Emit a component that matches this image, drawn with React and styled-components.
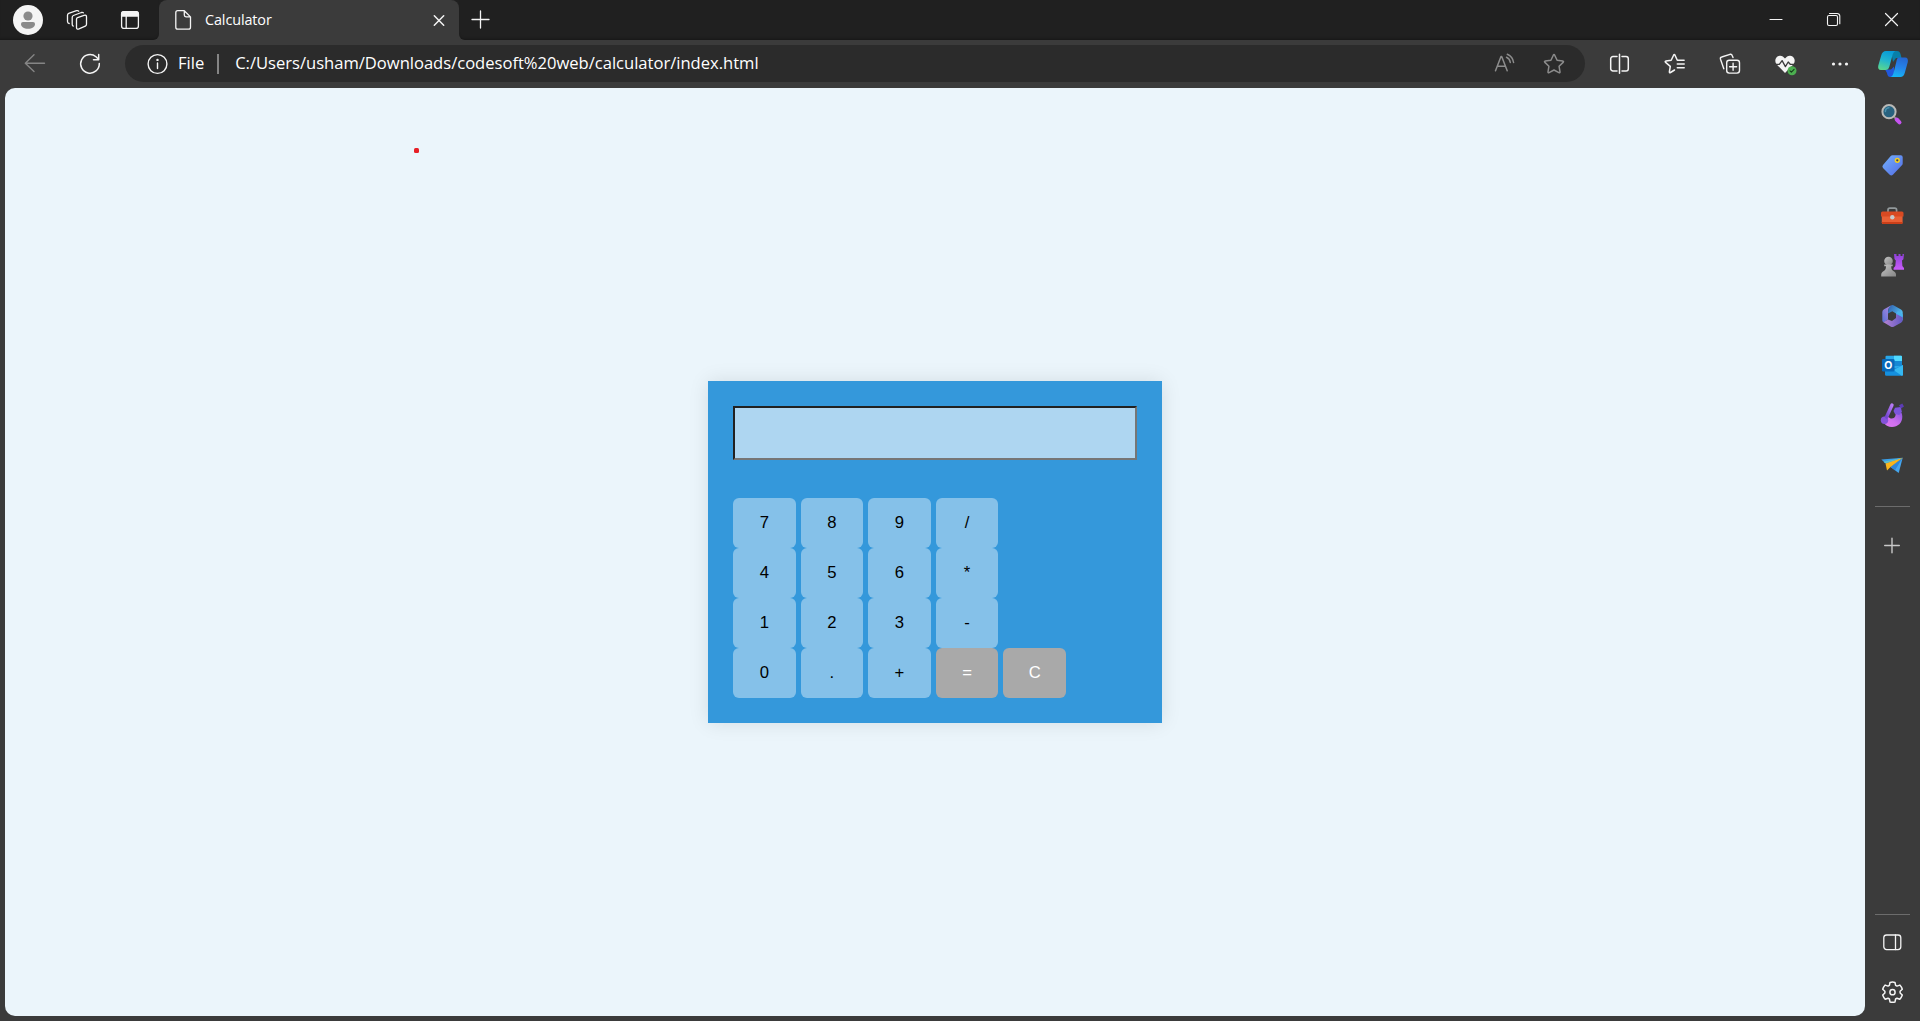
import React from "react";
import styled, { createGlobalStyle } from "styled-components";

const GlobalStyle = createGlobalStyle`
  * { box-sizing: border-box; }
  html, body { margin: 0; padding: 0; background: #3b3b3b; overflow: hidden; }
`;

const Browser = styled.div`
  display: flex;
  flex-direction: column;
  width: 1920px;
  height: 1021px;
  background: #3b3b3b;
  color: #fff;
  font-family: "Open Sans", "Noto Sans", sans-serif;
`;

const TitleBar = styled.header`
  display: flex;
  height: 40px;
  flex: none;
`;

const BarSection = styled.div`
  display: flex;
  align-items: center;
  background: #202020;
  box-shadow: inset 0 -3px 3px -2px rgba(0, 0, 0, 0.3);
`;

const BarStart = styled(BarSection)`
  width: 159px;
  padding-left: 13px;
  border-bottom-right-radius: 6px;
`;

const BarEnd = styled(BarSection)`
  flex: 1;
  padding-left: 9px;
  padding-right: 16px;
  border-bottom-left-radius: 6px;
`;

const TabSlot = styled.div`
  width: 300px;
  background: #202020;
`;

const Tab = styled.div`
  display: flex;
  align-items: center;
  height: 40px;
  padding: 0 8px 0 12px;
  background: #3b3b3b;
  border-radius: 8px 8px 0 0;
`;

const TabTitle = styled.span`
  flex: 1;
  margin-left: 10px;
  font-size: 14.4px;
  line-height: 20px;
  letter-spacing: -0.1px;
`;

const Glyph = styled.svg`
  display: block;
  flex: none;
  width: ${(p) => p.$size || 24}px;
  height: ${(p) => p.$size || 24}px;
  margin-left: ${(p) => p.$gap || 0}px;
  overflow: visible;
  fill: none;
  stroke: ${(p) => p.$color || "#f4f4f4"};
  stroke-width: ${(p) => p.$weight || 1.3};
  stroke-linecap: round;
  stroke-linejoin: round;
`;

const WindowButtons = styled.div`
  display: flex;
  gap: 34px;
  margin-left: auto;
`;

const Toolbar = styled.nav`
  display: flex;
  align-items: center;
  flex: none;
  height: 48px;
  padding: 0 12px 0 23px;
`;

const AddressBar = styled.div`
  display: flex;
  align-items: center;
  width: 1460px;
  height: 37px;
  margin-left: 23px;
  margin-bottom: 1px;
  padding: 0 19px 0 20px;
  border-radius: 19px;
  background: #2b2b2b;
`;

const AddressText = styled.span`
  padding-bottom: 1px;
  font-size: 16.6px;
  line-height: 24px;
  white-space: nowrap;
  letter-spacing: -0.02px;
  margin-left: ${(p) => p.$gap}px;
`;

const AddressRule = styled.i`
  width: 2px;
  height: 20px;
  margin-left: 13px;
  background: #858585;
`;

const AddressActions = styled.div`
  display: flex;
  gap: 25px;
  margin-left: auto;
`;

const ToolbarActions = styled.div`
  display: flex;
  gap: 31px;
  margin-left: 23px;
`;

const Body = styled.div`
  display: flex;
  flex: 1;
  padding-left: 5px;
`;

const Page = styled.main`
  position: relative;
  display: flex;
  align-items: center;
  justify-content: center;
  width: 1860px;
  height: 928px;
  border-radius: 10px;
  background: #ebf5fb;
`;

const PointerDot = styled.i`
  position: absolute;
  left: 409px;
  top: 59.5px;
  width: 5px;
  height: 5px;
  border-radius: 1.5px;
  background: #e71f26;
`;

const Calculator = styled.section`
  width: 454px;
  height: 342px;
  padding: 25px;
  background: #3498db;
  box-shadow: 0 0 19px rgba(0, 0, 0, 0.1);
`;

const Display = styled.div`
  height: 54px;
  margin-bottom: 38px;
  border: 2px solid;
  border-color: #212121 #767676 #767676 #212121;
  background: #aed6f1;
`;

const KeyRow = styled.div`
  display: flex;
  gap: 5px;
`;

const Key = styled.button`
  width: 62.6px;
  height: 50px;
  padding: 0;
  border: 0;
  border-radius: 6px;
  background: ${(p) => (p.$muted ? "#a9a9a9" : "#85c1e9")};
  color: ${(p) => (p.$muted ? "#fff" : "#000")};
  font: 16.67px "Liberation Sans", Arial, sans-serif;
`;

const Sidebar = styled.aside`
  display: flex;
  flex-direction: column;
  width: 55px;
  height: 933px;
  padding: 1px 0 8px;
`;

const SideItem = styled.div`
  display: flex;
  align-items: center;
  justify-content: center;
  flex: none;
  height: ${(p) => p.$height || 50}px;
  padding-right: 1px;
  padding-top: ${(p) => (p.$drop || 0) * 2}px;
`;

const SideRule = styled.hr`
  flex: none;
  width: 35px;
  height: 1px;
  margin: ${(p) => (p.$bottom ? "auto" : "17px")} 10px 0;
  border: 0;
  background: #6c6c6c;
`;

const keys = [
  ["7", "8", "9", "/"],
  ["4", "5", "6", "*"],
  ["1", "2", "3", "-"],
  ["0", ".", "+", "=", "C"],
];

const Profile = () => (
  <Glyph $size={30} viewBox="0 0 30 30" stroke="none">
    <g stroke="none">
      <circle cx="15" cy="15" r="15" fill="#f5f5f5" />
      <circle cx="15" cy="11" r="4.6" fill="#8b8b8b" />
      <path d="M8 19a2 2 0 0 1 2-2h10a2 2 0 0 1 2 2c0 3-3 4.800-7 4.800S8 22 8 19z" fill="#8b8b8b" />
    </g>
  </Glyph>
);

const Workspaces = () => (
  <Glyph $gap={22} viewBox="0 0 24 24">
    <path d="M11.500 11.200q0-1.200 1.100-1.600l6.400-2.300q2.500-.7 2.500 1.500v7.400q0 1.400-1.200 1.900l-6.300 2.800q-2.500 1-2.500-1.500z" />
    <path d="M8.300 18.200q-1.100-.3-1.100-1.900V9.400q0-1.400 1.200-1.900l8-3q1.300-.3 1.900.3" />
    <path d="M4.200 15.500q-1.700-.3-1.700-2V7.300q0-1.400 1.200-1.900l7.800-2.700q1.500-.4 2.200.5" />
  </Glyph>
);

const TabActions = () => (
  <Glyph $gap={29} viewBox="0 0 24 24">
    <rect x="3.600" y="3.600" width="16.800" height="16.800" rx="2.500" />
    <path d="M3.600 8V6a2.400 2.400 0 0 1 2.400-2.400h12A2.400 2.400 0 0 1 20.400 6v2z" fill="#f4f4f4" />
    <path d="M8.200 8v12" />
  </Glyph>
);

const DocumentIcon = () => (
  <Glyph viewBox="0 0 24 24">
    <path d="M6.800 2.700h6.500l6.200 6.200v10.300a2 2 0 0 1-2 2H6.800a2 2 0 0 1-2-2V4.700a2 2 0 0 1 2-2zM13.300 2.900v4.200a1.700 1.700 0 0 0 1.700 1.700h4.300" />
  </Glyph>
);

const TabClose = () => (
  <Glyph viewBox="0 0 24 24" $weight={1.5}>
    <path d="M7.300 7.800l9.400 9.400M16.700 7.800l-9.400 9.400" />
  </Glyph>
);

const NewTab = () => (
  <Glyph viewBox="0 0 24 24">
    <path d="M4 11.500h17M12.500 3v17" />
  </Glyph>
);

const Minimize = () => (
  <Glyph viewBox="0 0 24 24" $weight={1.1}>
    <path d="M6 11.500h12" />
  </Glyph>
);

const Restore = () => (
  <Glyph viewBox="0 0 24 24" $weight={1.1}>
    <rect x="5.500" y="7.500" width="10" height="10" rx="1.500" />
    <path d="M7.500 5.500h7.700a2.600 2.600 0 0 1 2.600 2.600v7.600" />
  </Glyph>
);

const CloseWindow = () => (
  <Glyph viewBox="0 0 24 24" $weight={1.2}>
    <path d="M5.500 5.500l12 12M17.500 5.500l-12 12" />
  </Glyph>
);

const Back = () => (
  <Glyph viewBox="0 0 24 24" $color="#858585" $weight={1.4}>
    <path d="M11 2.800L2.300 11.200l8.700 8.300M2.500 11.200h19" />
  </Glyph>
);

const Reload = () => (
  <Glyph viewBox="0 0 24 24" $gap={31} $weight={1.5}>
    <path d="M21.300 11.500A9.300 9.300 0 1 1 18 4.700l2.500 2.500M20.700 2.500v5.200h-5.200" />
  </Glyph>
);

const Info = () => (
  <Glyph viewBox="0 0 24 24" $weight={1.4}>
    <circle cx="12.500" cy="12" r="9.400" />
    <path d="M12.500 11v5.500" />
    <circle cx="12.500" cy="7.900" r=".5" fill="#fff" />
  </Glyph>
);

const ReadAloud = () => (
  <Glyph viewBox="0 0 24 24" $color="#8c8c8c" $weight={1.5}>
    <path d="M2.500 18.700L8 4.500h.7l5.500 14.200M4.500 14.300h8M14.300 2.200c3.600 1.600 5.800 4.600 6.300 8.300M13.500 5.200c2.200 1 3.500 2.900 3.800 5.300" />
  </Glyph>
);

const starPath =
  "M11.300 3.200q.7-1.200 1.400 0l2.400 5 5.600.8q1.400.3.400 1.400l-4 3.900.9 5.500q.1 1.400-1.100.8L12 18l-4.900 2.600q-1.200.6-1.100-.8l.9-5.500-4-3.900q-1-1.100.4-1.400l5.600-.8z";

const Star = () => (
  <Glyph viewBox="0 0 24 24" $color="#8c8c8c" $weight={1.5}>
    <path d={starPath} />
  </Glyph>
);

const Split = () => (
  <Glyph viewBox="0 0 24 24" $weight={1.5}>
    <path d="M9 4.500H5A2.300 2.300 0 0 0 2.700 6.800v9.900A2.300 2.300 0 0 0 5 19H9M14 4.500h4A2.300 2.300 0 0 1 20.300 6.800v9.900A2.300 2.300 0 0 1 18 19h-4M11.500 2.300v19" />
  </Glyph>
);

const Favorites = () => (
  <Glyph viewBox="0 0 24 24" $weight={1.5}>
    <path d="M11.500 18l-4 2.500q-1.300.6-1.100-.8l.9-5.300-4.700-4q-1-1.100.4-1.400l5.200-.8 2.400-5q.7-1.200 1.400 0l2.300 5h6.800M14.300 12h6.900M14.300 15.800h6.900" />
  </Glyph>
);

const Collections = () => (
  <Glyph viewBox="0 0 24 24" $weight={1.4}>
    <rect x="8.700" y="8.300" width="12.800" height="12.800" rx="2.500" />
    <path d="M15.100 11.300v7M11.600 14.800h7M5.800 16.800L2.500 7.200q-.5-1.700 1.200-2.200L12 2.300q1.700-.4 2.200 1.200l.8 2.100" />
  </Glyph>
);

const Essentials = () => (
  <Glyph viewBox="0 0 24 24">
    <path d="M12 21L3.500 12.300C1 9 2.500 4 6.700 3.700c2.300-.2 3.800 1 5.300 2.700 1.500-1.700 3-2.900 5.300-2.700C21.500 4 23 9 20.500 12.300z" fill="#f4f4f4" stroke="none" />
    <path d="M1.500 12.300h4.800l2.800-3.700 3.300 6 2.800-4.600 2 2.300h5.500" stroke="#3b3b3b" />
    <circle cx="19" cy="18.700" r="4.500" fill="#4caf50" stroke="none" />
    <path d="M17 18.800l1.400 1.400 2.700-2.800" stroke="#163b1b" strokeWidth="1.1" />
  </Glyph>
);

const More = () => (
  <Glyph viewBox="0 0 24 24">
    <g fill="#f4f4f4" stroke="none">
      <circle cx="5.500" cy="12" r="1.600" />
      <circle cx="12" cy="12" r="1.600" />
      <circle cx="18.500" cy="12" r="1.600" />
    </g>
  </Glyph>
);

const Copilot = () => (
  <Glyph $size={30} $gap={26} viewBox="0 -1 30 30">
    <defs>
      <linearGradient id="cp-left" x1=".6" y1="0" x2=".3" y2="1">
        <stop offset="0" stopColor="#079bd8" />
        <stop offset=".5" stopColor="#22b5cf" />
        <stop offset="1" stopColor="#59d68f" />
      </linearGradient>
      <linearGradient id="cp-right" x1=".6" y1="0" x2=".4" y2="1">
        <stop offset="0" stopColor="#2567d2" />
        <stop offset=".5" stopColor="#2583e9" />
        <stop offset="1" stopColor="#15b5f5" />
      </linearGradient>
    </defs>
    <g stroke="none">
      <path d="M13 1h6c2 0 3 1.300 3.500 3l1 4h-5.500l-3 4z" fill="#087fa8" />
      <path d="M7 19.500h6l3-3v10.500h-3c-3 0-3.500-1.500-4-4z" fill="#2158dc" />
      <path d="M8 1h9.500c-2 .5-2.700 3-3.500 6l-2.600 9.500c-.7 2.500-1.800 3.500-4 3.500H3C.5 20-.3 18 .3 15.500l2.900-10C4 2.500 5.500 1 8 1z" fill="url(#cp-left)" />
      <path d="M21 7.500h6c2.500 0 3.300 2 2.800 4.500l-2.900 10.500c-.8 3-2.200 4.500-4.700 4.500H12.500c2.200-.5 2.700-3 3.500-6l2.300-9c.7-3 .9-4.500 2.700-4.500z" fill="url(#cp-right)" />
    </g>
  </Glyph>
);

const SearchIcon = () => (
  <Glyph viewBox="0 0 24 24">
    <path d="M14 14.700l2.500 2.500" stroke="#8d8d8d" strokeWidth="2" />
    <path d="M16.700 17.500l2.800 2.800" stroke="#c553ef" strokeWidth="4" />
    <circle cx="9" cy="9.700" r="6.600" fill="#28627f" stroke="#b9b9b7" strokeWidth="2" />
    <path d="M5.400 9.500a3.800 3.800 0 0 1 3.500-3.700" stroke="#4b91ae" strokeWidth="1.5" />
  </Glyph>
);

const TagIcon = () => (
  <Glyph viewBox="0 0 24 24">
    <defs>
      <linearGradient id="tag" x1="0" y1=".3" x2=".7" y2="1">
        <stop offset="0" stopColor="#6fa7f8" />
        <stop offset="1" stopColor="#5775e8" />
      </linearGradient>
    </defs>
    <path d="M10.500 3.200q.9-.9 2-.9h8.200q2 0 2 2v6.200q0 1-.8 1.800l-9 9.400q-1.600 1.400-3.200 0l-6.700-6.800q-1.200-1.500 0-3z" fill="url(#tag)" stroke="none" />
    <circle cx="17.300" cy="7.300" r="1.900" fill="#3b4560" stroke="#f3ce22" strokeWidth="1.5" />
  </Glyph>
);

const ToolboxIcon = () => (
  <Glyph viewBox="0 0 24 24">
    <path d="M8 7.500V6q0-1.800 1.800-1.800h5q1.800 0 1.800 1.800v1.500" stroke="#92999b" strokeWidth="1.7" />
    <g stroke="none">
      <path d="M1.800 12h20.800v6.500q0 1.500-1.500 1.500H3.300q-1.500 0-1.500-1.500z" fill="#e96035" />
      <path d="M1.800 18h20.800v.5q0 1.500-1.500 1.500H3.300q-1.500 0-1.500-1.500z" fill="#cb3f19" />
      <path d="M2.500 7.500h19.500q1.500 0 1.500 1.500v3.500H1V9q0-1.500 1.500-1.500z" fill="#d94a22" />
      <circle cx="12.300" cy="13.300" r="2.200" fill="#c6cbce" />
    </g>
  </Glyph>
);

const GamesIcon = () => (
  <Glyph viewBox="0 0 24 24">
    <defs>
      <linearGradient id="pawn" x1="0" y1="0" x2="1" y2="1">
        <stop offset="0" stopColor="#c4c4c4" />
        <stop offset="1" stopColor="#858585" />
      </linearGradient>
      <linearGradient id="rook" x1="0" y1="0" x2="0" y2="1">
        <stop offset="0" stopColor="#8d40d8" />
        <stop offset="1" stopColor="#ca5dfa" />
      </linearGradient>
    </defs>
    <g stroke="none">
      <path d="M14 1h2.500v2h2V1h2v2h2V1H24l-.6 5.200-1.400 1.300.4 5.500 1.600 2v1.800H13.600V15l1.700-2 .5-5.500L14.500 6z" fill="url(#rook)" />
      <circle cx="8.500" cy="8" r="4.300" fill="url(#pawn)" />
      <path d="M4.300 11.500h8.400v1.800h-1.500c0 3 1 4.200 3.300 5.400q1.500.9 1.500 2.800v2H1.200v-2q0-1.900 1.500-2.800c2.300-1.200 3.300-2.400 3.300-5.400H4.300z" fill="url(#pawn)" />
    </g>
  </Glyph>
);

const OfficeIcon = () => (
  <Glyph viewBox="0 0 24 24">
    <defs>
      <linearGradient id="office-left" x1="1" y1="0" x2="0" y2="1">
        <stop offset="0" stopColor="#b98be2" />
        <stop offset="1" stopColor="#5671d3" />
      </linearGradient>
      <linearGradient id="office-top" x1="0" y1="0" x2="1" y2=".6">
        <stop offset="0" stopColor="#2f5cab" />
        <stop offset="1" stopColor="#54c4f4" />
      </linearGradient>
      <linearGradient id="office-base" x1="0" y1="0" x2="1" y2="0">
        <stop offset="0" stopColor="#b583d2" />
        <stop offset="1" stopColor="#6259c4" />
      </linearGradient>
    </defs>
    <g stroke="none">
      <path d="M8.500 3L11.500 1.200q1-.4 2 .1L21 5.500q1.700 1 1.700 2.500v8.500L16 12V9.500L12.300 7.200 8 9.500z" fill="url(#office-top)" />
      <path d="M11.500 1.200L4 5.300Q2.300 6.300 2.300 8v8.500q0 1.200 1.300 2L8 15.500V6.500q0-3 3.500-5.300z" fill="url(#office-left)" />
      <path d="M22.700 12.500V16q0 1.700-1.700 2.700l-7.300 4q-1.400.7-2.700 0L3.500 18.300 8 15.500l4 1.500 4-3V9.700z" fill="url(#office-base)" />
      <path d="M16 9.500l6.700 4v-3L18 7z" fill="#48b2ee" />
    </g>
  </Glyph>
);

const OutlookLetter = styled.text`
  font: 700 10.5px Inter, sans-serif;
  fill: #fff;
  stroke: none;
  text-anchor: middle;
`;

const OutlookIcon = () => (
  <Glyph viewBox="0 0 24 24">
    <g stroke="none">
      <rect x="5.500" y="1.700" width="16.500" height="13" rx="1" fill="#29a8ea" />
      <path d="M14 1.700h7q1 0 1 1v5h-8z" fill="#50d9ff" />
      <path d="M14 7h8v5h-8z" fill="#1688d4" />
      <path d="M5 12l9 3 9-4v9.500q0 1.200-1.200 1.200H6.200Q5 21.700 5 20.500z" fill="#1590df" />
      <path d="M23 11v9.500q0 1.200-1.200 1.200L13.500 16z" fill="#35b8f1" />
      <rect x="2" y="5" width="12.500" height="12.500" rx="1.200" fill="#0869b9" />
    </g>
    <OutlookLetter x="8.300" y="15">O</OutlookLetter>
  </Glyph>
);

const DesignerIcon = () => (
  <Glyph viewBox="0 0 24 24">
    <defs>
      <linearGradient id="swoosh" x1="1" y1="0" x2="0" y2="1">
        <stop offset="0" stopColor="#8a55e0" />
        <stop offset=".55" stopColor="#cf70ee" />
        <stop offset="1" stopColor="#df78f4" />
      </linearGradient>
      <linearGradient id="brush" x1="1" y1="0" x2="0" y2="1">
        <stop offset="0" stopColor="#b67af5" />
        <stop offset="1" stopColor="#7445ce" />
      </linearGradient>
    </defs>
    <g stroke="none">
      <path d="M3.500 19c1.500 3.500 4.800 5 8.500 5 5.800 0 10.300-4.300 10.300-10.300 0-1.700-.4-3.400-1.200-4.700h-6c1.300 3.500 0 6.500-3.300 6.500-1.500 0-2.700-.6-3.400-1.500z" fill="url(#swoosh)" />
      <path d="M15 4.800l5.800-.8 1 4.500-2.500 3.500-4.300-1-1.500-3z" fill="#7c55dc" />
      <path d="M19 2.300l3.300-1.800 1.700 3-3 2z" fill="#5c3cb4" />
      <circle cx="4.500" cy="17.300" r="3.700" fill="#8453da" />
    </g>
    <path d="M12 2L6.500 14" stroke="url(#brush)" strokeWidth="3.4" />
  </Glyph>
);

const DropIcon = () => (
  <Glyph viewBox="0 0 24 24">
    <g stroke="none">
      <path d="M1.300 6.500L22.700 4.700 7.500 12z" fill="#3a9fe8" />
      <path d="M22.700 4.700l-4 15.200L10.500 14z" fill="#45a6ee" />
      <path d="M22.700 4.700L15 17.200 10.500 14z" fill="#2e86db" />
      <path d="M5.500 10.500L22.700 4.700 10.500 14 7 17.500z" fill="#f9b51c" />
      <path d="M22.700 4.700L3.500 8.700l1.600 1.500z" fill="#63c1c4" />
    </g>
  </Glyph>
);

const AddIcon = () => (
  <Glyph viewBox="0 0 24 24" $color="#c8c8c8" $weight={1.4}>
    <path d="M4.700 11.500h14.600M12 4.200v14.600" />
  </Glyph>
);

const PanelIcon = () => (
  <Glyph viewBox="0 0 24 24">
    <rect x="3.800" y="4" width="17" height="14.600" rx="2.800" />
    <path d="M15.500 4v14.600" />
  </Glyph>
);

const GearIcon = () => (
  <Glyph viewBox="0 0 24 24" $weight={1.5}>
    <path d="M10 2.400q2.500-.6 5 0l.6 2.900 1.400.8 2.800-1q1.700 1.800 2.500 4.200l-2.200 2v1.700l2.200 2q-.8 2.400-2.500 4.200l-2.800-1-1.400.8-.6 2.900q-2.500.6-5 0L9.400 19 8 18.200l-2.800 1Q3.500 17.400 2.700 15l2.200-2v-1.700l-2.200-2q.8-2.400 2.500-4.200l2.800 1 1.400-.8z" />
    <circle cx="12.500" cy="12.200" r="2.600" />
  </Glyph>
);

const sideApps = [
  { Icon: SearchIcon, drop: 0 },
  { Icon: TagIcon, drop: 1 },
  { Icon: ToolboxIcon, drop: 2 },
  { Icon: GamesIcon, drop: 1 },
  { Icon: OfficeIcon, drop: 2 },
  { Icon: OutlookIcon, drop: 2 },
  { Icon: DesignerIcon, drop: 1 },
  { Icon: DropIcon, drop: 1 },
];

export default function App() {
  return (
    <Browser>
      <GlobalStyle />
      <TitleBar>
        <BarStart>
          <Profile />
          <Workspaces />
          <TabActions />
        </BarStart>
        <TabSlot>
          <Tab>
            <DocumentIcon />
            <TabTitle>Calculator</TabTitle>
            <TabClose />
          </Tab>
        </TabSlot>
        <BarEnd>
          <NewTab />
          <WindowButtons>
            <Minimize />
            <Restore />
            <CloseWindow />
          </WindowButtons>
        </BarEnd>
      </TitleBar>
      <Toolbar>
        <Back />
        <Reload />
        <AddressBar>
          <Info />
          <AddressText $gap={9}>File</AddressText>
          <AddressRule />
          <AddressText $gap={16}>
            C:/Users/usham/Downloads/codesoft%20web/calculator/index.html
          </AddressText>
          <AddressActions>
            <ReadAloud />
            <Star />
          </AddressActions>
        </AddressBar>
        <ToolbarActions>
          <Split />
          <Favorites />
          <Collections />
          <Essentials />
          <More />
        </ToolbarActions>
        <Copilot />
      </Toolbar>
      <Body>
        <Page>
          <PointerDot />
          <Calculator>
            <Display />
            {keys.map((row) => (
              <KeyRow key={row[0]}>
                {row.map((label) => (
                  <Key key={label} $muted={label === "=" || label === "C"}>{label}</Key>
                ))}
              </KeyRow>
            ))}
          </Calculator>
        </Page>
        <Sidebar>
          {sideApps.map(({ Icon, drop }, i) => (
            <SideItem key={i} $drop={drop}><Icon /></SideItem>
          ))}
          <SideRule />
          <SideItem $height={78}><AddIcon /></SideItem>
          <SideRule $bottom />
          <SideItem $height={56}><PanelIcon /></SideItem>
          <SideItem $height={42}><GearIcon /></SideItem>
        </Sidebar>
      </Body>
    </Browser>
  );
}
